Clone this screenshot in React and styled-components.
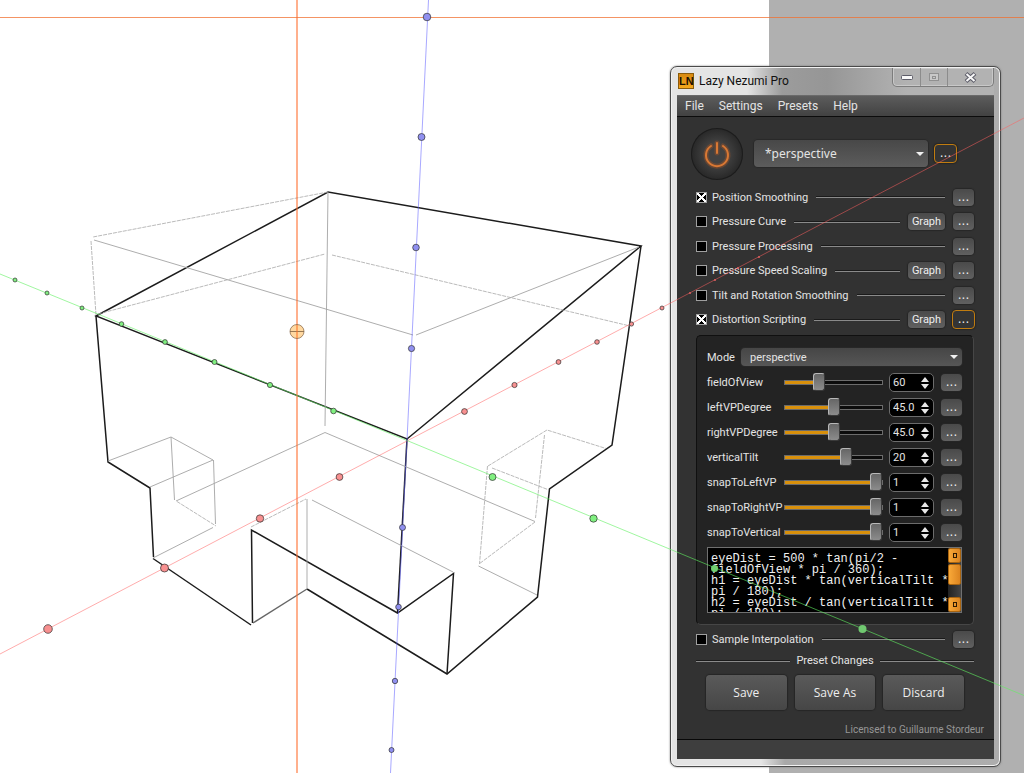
import React from "react"
import styled, { createGlobalStyle } from "styled-components"

const GlobalStyle = createGlobalStyle`
  * { box-sizing: border-box; }
  body {
    margin: 0;
    overflow: hidden;
    background: #ffffff;
    font-family: Roboto, "Noto Sans", sans-serif;
    font-size: 11px;
  }
  button, input, select, textarea {
    font: inherit;
    color: inherit;
    margin: 0;
    padding: 0;
    border: 0;
    outline: none;
  }
`

const Desktop = styled.div`
  position: relative;
  display: flex;
  min-height: 100vh;
`

const Paper = styled.main`
  flex: 1;
  background: #ffffff;
`

const Pasteboard = styled.div`
  width: 255px;
  background: #b0b0b0;
`

const Layer = styled.svg`
  position: absolute;
  inset: 0;
  width: 100%;
  height: 100%;
  pointer-events: none;
`

const Window = styled.section`
  position: absolute;
  top: 66px;
  right: 23px;
  width: 331px;
  padding: 0 6px 7px;
  border: 1px solid #4a4a4a;
  border-radius: 7px;
  background: linear-gradient(to right, #e4e4e4 90px, #a9a9a9 114px, #adadad);
  box-shadow: inset 0 0 0 1px #f2f2f2, 0 0 2px #777777;
`

const TitleBar = styled.header`
  display: flex;
  align-items: flex-start;
  height: 27px;
  margin: 1px 0 0;
  background: linear-gradient(to right, #e4e4e4 70px, #9c9c9c 105px, #969696 150px, #b2b2b2 230px);
`

const Logo = styled.span`
  width: 16px;
  height: 16px;
  margin: 5px 5px 0 1px;
  border: 1px solid #8a5c0c;
  background: linear-gradient(#d88a10, #f4a81c);
  color: #1c1000;
  font: bold 11px/14px "Liberation Sans", sans-serif;
  text-align: center;
`

const Title = styled.h1`
  flex: 1;
  margin: 4px 0 0;
  font: normal 12px/18px Roboto, sans-serif;
  color: #111111;
`

const Caption = styled.div`
  display: flex;
  height: 19px;
  border: 1px solid #7c7c7c;
  border-top: 0;
  border-radius: 0 0 5px 5px;
  box-shadow: inset 0 0 0 1px #c8c8c8;
`

const CaptionButton = styled.button`
  width: ${props => props.$wide ? "46px" : "27px"};
  background: transparent;
  display: flex;
  align-items: center;
  justify-content: center;
  & + & {
    border-left: 1px solid #8c8c8c;
  }
`

const Client = styled.div`
  border-top: 1px solid #6a6a6a;
  background: #323232;
  color: #e4e4e4;
`

const MenuBar = styled.nav`
  display: flex;
  gap: 15px;
  height: 21px;
  padding: 0 8px;
  border-bottom: 1px solid #0c0c0c;
  background: linear-gradient(#5c5c5c, #424242);
  font-size: 12px;
  line-height: 20px;
`

const MenuItem = styled.button`
  background: transparent;
`

const Body = styled.div`
  padding: 10px 20px 0 19px;
`

const PresetBar = styled.div`
  display: flex;
  align-items: center;
  gap: 7px;
  height: 53px;
  margin: 0 0 5px -5px;
`

const PowerButton = styled.button`
  width: 52px;
  height: 52px;
  margin-right: 4px;
  border-radius: 50%;
  background: radial-gradient(#424242 30%, #2b2b2b 65%, #161616);
  box-shadow: inset 0 0 0 1px #1c1c1c;
  svg { display: block; margin: auto; }
`

const SelectBox = styled.div`
  position: relative;
  flex: ${props => props.$grow ? "1" : "0 0 174px"};
  &::after {
    content: "";
    position: absolute;
    right: 4px;
    top: 50%;
    margin-top: -2px;
    border: 4px solid transparent;
    border-top-color: #f0f0f0;
    border-bottom: 0;
  }
`

const Select = styled.select`
  appearance: none;
  display: block;
  width: 100%;
  height: ${props => props.$large ? "27px" : "18px"};
  padding: ${props => props.$large ? "0 11px" : "0 9px"};
  border-radius: 4px;
  background: linear-gradient(${props => props.$large ? "#484848, #5c5c5c" : "#464646, #565656"});
  font: ${props => props.$large ? "12px 'Noto Sans', sans-serif" : "inherit"};
  box-shadow: 0 0 1px 1px #292929;
`

const SmallButton = styled.button`
  flex: none;
  width: 37px;
  height: 17px;
  border-radius: 4px;
  background: linear-gradient(#4a4a4a, #606060);
  line-height: 16px;
  color: #eeeeee;
  box-shadow: 0 0 1px 1px #262626;
`

const MoreButton = styled(SmallButton)`
  height: ${props => props.$active ? "19px" : "17px"};
  width: ${props => props.$active ? "23px" : "21px"};
  margin: ${props => props.$active ? "0 -1px" : "0"};
  border: ${props => props.$active ? "1px solid #c07c10" : "0"};
  ${props => props.$active && "background: #343434;"}
  justify-self: end;
  font: 12px/17px "DejaVu Sans", sans-serif;
`

const OptionRow = styled.div`
  display: flex;
  align-items: center;
  gap: 8px;
  height: ${props => props.$graph ? "25px" : "24px"};
`

const OptionLabel = styled.label`
  display: flex;
  align-items: center;
  gap: 5px;
  white-space: nowrap;
`

const Tick = styled.input`
  appearance: none;
  width: 11px;
  height: 11px;
  border: 1px solid #a0a0a0;
  background: #000000;
  &:checked {
    background:
      linear-gradient(45deg, transparent 42%, #ffffff 42% 58%, transparent 58%),
      linear-gradient(-45deg, #000000 42%, #ffffff 42% 58%, #000000 58%);
  }
`

const Rule = styled.div`
  flex: 1;
  height: 2px;
  border-top: 1px solid #1a1a1a;
  border-bottom: 1px solid #8a8a8a;
`

const Panel = styled.section`
  margin: 3px 0 2px;
  padding: 12px 11px 11px 10px;
  border: 1px solid #464646;
  border-top-color: #101010;
  border-left-color: #101010;
  border-radius: 5px;
  background: #232323;
`

const ModeRow = styled.div`
  display: flex;
  align-items: center;
  height: 18px;
  margin-bottom: 4px;
  label { width: 34px; }
`

const ParamRow = styled.div`
  display: grid;
  grid-template-columns: 71px 99px 45px 1fr;
  column-gap: 6px;
  align-items: center;
  height: 25px;
  label { white-space: nowrap; }
`

const Slider = styled.input`
  appearance: none;
  width: 100%;
  height: 19px;
  background: transparent;
  &::-webkit-slider-runnable-track {
    height: 5px;
    border: 1px solid #6c6c6c;
    background: linear-gradient(to right, #d8900c var(--fill), #0c0c0c var(--fill));
  }
  &::-webkit-slider-thumb {
    appearance: none;
    width: 12px;
    height: 18px;
    margin-top: -8px;
    border: 1px solid #b8b8b8;
    border-radius: 3px;
    border-right-color: #3a3a3a;
    border-bottom-color: #3a3a3a;
    background: linear-gradient(#666666, #8c8c8c);
  }
`

const Spin = styled.div`
  display: flex;
  height: 19px;
  padding-left: 3px;
  border: 1px solid #6c6c6c;
  border-radius: 5px;
  background: #000000;
  input {
    width: 27px;
    background: transparent;
  }
`

const SpinArrows = styled.div`
  display: flex;
  flex-direction: column;
  justify-content: center;
  gap: 2px;
  button {
    width: 9px;
    height: 5px;
    background: transparent;
    display: flex;
    justify-content: center;
  }
`

const ScriptBox = styled.div`
  display: flex;
  height: 66px;
  margin-top: 2px;
  border: 1px solid #707070;
  background: #000000;
`

const Code = styled.textarea`
  flex: 1;
  min-width: 0;
  padding: 6px 0 0 3px;
  background: transparent;
  resize: none;
  overflow: hidden;
  white-space: pre;
  font: 12px/11px "Liberation Mono", monospace;
  color: #f0f0f0;
`

const ScrollBar = styled.div`
  display: flex;
  flex-direction: column;
  gap: 1px;
  width: 13px;
  background: linear-gradient(to right, #222222, #444444);
`

const ScrollPart = styled.button`
  height: ${props => props.$thumb ? "21px" : "15px"};
  border: 1px solid #a86410;
  border-radius: 2px;
  background: linear-gradient(to right, #f8a838, #dc8420);
  display: flex;
  align-items: center;
  justify-content: center;
  &:last-child { margin-top: auto; }
  i {
    width: 4px;
    height: 5px;
    border: 1px solid #2c1800;
  }
`

const Divider = styled.div`
  display: flex;
  align-items: center;
  gap: 6px;
  height: 19px;
`

const Actions = styled.div`
  display: grid;
  grid-template-columns: repeat(3, 1fr);
  gap: 8px;
  padding: 5px 10px 0;
`

const ActionButton = styled.button`
  height: 35px;
  border-radius: 4px;
  background: linear-gradient(#5a5a5a, #464646);
  font: 12px "Open Sans", sans-serif;
  color: #eeeeee;
  box-shadow: 0 0 1px 1px #252525;
`

const License = styled.p`
  margin: 12px -10px 0 0;
  font-size: 10px;
  line-height: 16px;
  text-align: right;
  color: #969696;
`

const StatusBar = styled.footer`
  height: 20px;
  margin-top: 1px;
  border-top: 1px solid #080808;
  background: #3e3e3e;
`

const OPTIONS = [
  { label: "Position Smoothing", checked: true },
  { label: "Pressure Curve", graph: true },
  { label: "Pressure Processing" },
  { label: "Pressure Speed Scaling", graph: true },
  { label: "Tilt and Rotation Smoothing" },
  { label: "Distortion Scripting", checked: true, graph: true, active: true },
]

const PARAMS = [
  { name: "fieldOfView", value: "60", pos: 33 },
  { name: "leftVPDegree", value: "45.0", pos: 50 },
  { name: "rightVPDegree", value: "45.0", pos: 50 },
  { name: "verticalTilt", value: "20", pos: 65 },
  { name: "snapToLeftVP", value: "1", pos: 100 },
  { name: "snapToRightVP", value: "1", pos: 100 },
  { name: "snapToVertical", value: "1", pos: 100 },
]

const SCRIPT = `eyeDist = 500 * tan(pi/2 -
fieldOfView * pi / 360);
h1 = eyeDist * tan(verticalTilt *
pi / 180);
h2 = eyeDist / tan(verticalTilt *
pi / 180);`

const SOLID = [
  "M96 316L328 192L641 246L407 439Z",
  "M96 316L108 462L150 488L153.500 557",
  "M153 558.500L251 625",
  "M252.500 623L251.500 530L397.500 613L453.500 573.500L447 674",
  "M307 589L447 674L537.500 597L549.500 489L612 445L641 246",
  "M407 439L397.500 613",
]

const FAINT = [
  "M94 240L413 335",
  "M416 335L639 247",
  "M328 192L325 426",
  "M307 589L307 499",
  "M176 501L325 432.500L535 521.500",
  "M108 461L171 437L213 460L150 487",
  "M171 437L174.500 500",
  "M213.500 460L215.500 524",
  "M153 558L213 527.500",
  "M312 500L453 572",
  "M478.500 566L537 595",
]

const DASHED = [
  "M328 192L93 237",
  "M91 241L96 315",
  "M98 314L325 254",
  "M332 255L630 326",
  "M177 501.500L216 526",
  "M251 527L306 499",
  "M488 466L547 430L606 448.500",
  "M492 468L549 490",
  "M487.500 466L479.500 564",
  "M544.500 435L535.500 518",
  "M535 522L479 564",
]

const GREEN_DOTS = [[15, 280, 2], [47, 293, 2], [82, 308, 2], [121.5, 324, 2.3], [165, 342, 2.4], [214.5, 362, 2.5], [270, 385, 2.6], [333.5, 411, 2.8], [492.5, 477, 3.5], [593.5, 518.5, 3.7]]
const RED_DOTS = [[48, 629, 4.3], [164.5, 568, 4], [260, 518.5, 3.7], [339.5, 477, 3.4], [464.5, 411.5, 2.9], [514.5, 385, 2.6], [558.5, 362, 2.4], [597, 342, 2.3], [631.5, 324, 2.1], [662, 308, 2]]
const BLUE_DOTS = [[427, 17, 3.8], [421.5, 137, 3.5], [416, 247.5, 3.3], [411.5, 348.5, 3.1], [402.5, 527.5, 3], [398.5, 607, 2.8], [395, 681, 2.7], [391.5, 750, 2.5]]

function Dots({ points, fill }) {
  return points.map(([x, y, r]) => (
    <circle key={`${x}-${y}`} cx={x} cy={y} r={r} fill={fill} stroke="#303030" strokeOpacity="0.7" />
  ))
}

function Sketch() {
  return (
    <Layer fill="none" aria-hidden="true">
      <g stroke="#1c1c1c" strokeWidth="1.5">
        {SOLID.map(d => <path key={d} d={d} />)}
      </g>
      <path d="M253 623L307 589" stroke="#666666" strokeWidth="1.300" />
      <g stroke="#a4a4a4" strokeWidth="0.900">
        {FAINT.map(d => <path key={d} d={d} />)}
      </g>
      <g stroke="#a8a8a8" strokeWidth="0.800" strokeDasharray="4 1">
        {DASHED.map(d => <path key={d} d={d} />)}
      </g>
    </Layer>
  )
}

function Guides() {
  return (
    <Layer fill="none" aria-hidden="true">
      <path d="M297 0V2000" stroke="#ff7030" strokeOpacity="0.550" strokeWidth="2" />
      <path d="M0 17.500H3000" stroke="#f07030" strokeOpacity="0.750" />
      <path d="M0 654L1024 118" stroke="#ff6060" strokeOpacity="0.520" />
      <path d="M0 274L407 440.500L1024 695.500" stroke="#60f060" strokeOpacity="0.600" />
      <path d="M428.500 0L407 440L390.500 773" stroke="#6060ff" strokeOpacity="0.550" />
      <Dots points={GREEN_DOTS} fill="#80f080" />
      <Dots points={RED_DOTS} fill="#f89090" />
      <Dots points={BLUE_DOTS} fill="#9090f0" />
      <circle cx="714.500" cy="568.500" r="3.500" fill="#70d070" />
      <circle cx="862.500" cy="629" r="4" fill="#70c870" />
      <g fill="#e06060">
        <circle cx="690" cy="293" r="1" />
        <circle cx="715" cy="280" r="1" />
        <circle cx="738" cy="268" r="1" />
        <circle cx="759" cy="257" r="1" />
      </g>
      <circle cx="297" cy="331.500" r="7" fill="#ffc878" fillOpacity="0.700" stroke="#806040" strokeOpacity="0.700" />
      <path d="M290 331.500H304" stroke="#806040" strokeOpacity="0.800" />
      <path d="M297 325V338" stroke="#ff7830" strokeOpacity="0.800" />
    </Layer>
  )
}

function Option({ label, checked, graph, active }) {
  return (
    <OptionRow $graph={graph}>
      <OptionLabel>
        <Tick type="checkbox" defaultChecked={checked} />
        {label}
      </OptionLabel>
      <Rule />
      {graph && <SmallButton>Graph</SmallButton>}
      <MoreButton $active={active}>...</MoreButton>
    </OptionRow>
  )
}

function Param({ name, value, pos }) {
  return (
    <ParamRow>
      <label htmlFor={name}>{name}</label>
      <Slider id={name} type="range" defaultValue={pos} style={{ "--fill": `${pos}%` }} />
      <Spin>
        <input aria-label={`${name} value`} defaultValue={value} />
        <SpinArrows>
          <button aria-label="Increase"><svg width="8" height="5"><path d="M0 5L4 0L8 5Z" fill="#e8e8e8" /></svg></button>
          <button aria-label="Decrease"><svg width="8" height="5"><path d="M0 0L4 5L8 0Z" fill="#e8e8e8" /></svg></button>
        </SpinArrows>
      </Spin>
      <MoreButton>...</MoreButton>
    </ParamRow>
  )
}

function App() {
  return (
    <Desktop>
      <GlobalStyle />
      <Paper />
      <Pasteboard />
      <Sketch />
      <Window>
        <TitleBar>
          <Logo>LN</Logo>
          <Title>Lazy Nezumi Pro</Title>
          <Caption>
            <CaptionButton aria-label="Minimize">
              <svg width="14" height="7"><rect x="1.500" y="1.500" width="11" height="4" rx="1" fill="#f8f8f8" stroke="#5c5c68" /></svg>
            </CaptionButton>
            <CaptionButton aria-label="Maximize">
              <svg width="12" height="10" fill="none"><rect x="1.500" y="1.500" width="9" height="7" fill="#c8c8c8" stroke="#909090" /><rect x="4.500" y="4.500" width="3" height="2" stroke="#909090" /></svg>
            </CaptionButton>
            <CaptionButton $wide aria-label="Close">
              <svg width="13" height="11" fill="none"><path d="M2 1.500L11 9.500M11 1.500L2 9.500" stroke="#5c5c68" strokeWidth="4" /><path d="M2.500 2L10.500 9M10.500 2L2.500 9" stroke="#f8f8f8" strokeWidth="2" /></svg>
            </CaptionButton>
          </Caption>
        </TitleBar>
        <Client>
          <MenuBar>
            <MenuItem>File</MenuItem>
            <MenuItem>Settings</MenuItem>
            <MenuItem>Presets</MenuItem>
            <MenuItem>Help</MenuItem>
          </MenuBar>
          <Body>
            <PresetBar>
              <PowerButton aria-label="Power">
                <svg width="36" height="36" fill="none" strokeLinecap="round">
                  <path d="M12 10A11 11 0 1 0 24 10M18 7V17" stroke="#e86010" strokeOpacity="0.250" strokeWidth="5" />
                  <path d="M12 10A11 11 0 1 0 24 10M18 7V17" stroke="#d87834" strokeWidth="2" />
                </svg>
              </PowerButton>
              <SelectBox>
                <Select $large aria-label="Preset">
                  <option>*perspective</option>
                </Select>
              </SelectBox>
              <MoreButton $active>...</MoreButton>
            </PresetBar>
            {OPTIONS.map(option => <Option key={option.label} {...option} />)}
            <Panel>
              <ModeRow>
                <label htmlFor="mode">Mode</label>
                <SelectBox $grow>
                  <Select id="mode"><option>perspective</option></Select>
                </SelectBox>
              </ModeRow>
              {PARAMS.map(param => <Param key={param.name} {...param} />)}
              <ScriptBox>
                <Code aria-label="Script" defaultValue={SCRIPT} spellCheck={false} />
                <ScrollBar>
                  <ScrollPart aria-label="Scroll up"><i /></ScrollPart>
                  <ScrollPart $thumb aria-label="Scroll position" />
                  <ScrollPart aria-label="Scroll down"><i /></ScrollPart>
                </ScrollBar>
              </ScriptBox>
            </Panel>
            <Option label="Sample Interpolation" />
            <Divider><Rule />Preset Changes<Rule /></Divider>
            <Actions>
              <ActionButton>Save</ActionButton>
              <ActionButton>Save As</ActionButton>
              <ActionButton>Discard</ActionButton>
            </Actions>
            <License>Licensed to Guillaume Stordeur</License>
          </Body>
          <StatusBar />
        </Client>
      </Window>
      <Guides />
    </Desktop>
  )
}

export default App
